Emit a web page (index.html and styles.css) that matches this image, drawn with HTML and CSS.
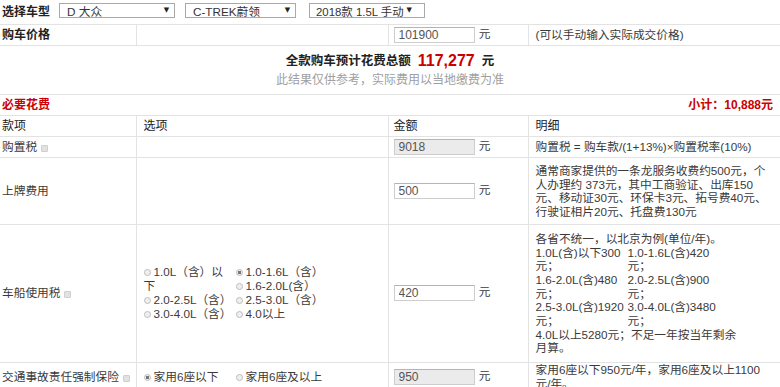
FILE: index.html
```html
<!DOCTYPE html>
<html lang="zh-CN">
<head>
  <meta charset="UTF-8">
  <title>购车费用计算</title>
  <link rel="stylesheet" href="styles.css">
</head>
<body>
  <div class="pick-row">
    <span class="pick-label">选择车型</span>
    <div class="fake-select brand"><span>D 大众</span><span class="arrow">▼</span></div>
    <div class="fake-select series"><span>C-TREK蔚领</span><span class="arrow">▼</span></div>
    <div class="fake-select model"><span>2018款 1.5L 手动</span><span class="arrow">▼</span></div>
  </div>

  <table class="calc">
    <colgroup>
      <col class="c-name"><col class="c-opt"><col class="c-amount"><col class="c-detail">
    </colgroup>
    <tr class="single">
      <td class="strong">购车价格</td>
      <td></td>
      <td><input class="amount" type="text" value="101900"> 元</td>
      <td>(可以手动输入实际成交价格)</td>
    </tr>
  </table>

  <div class="total">
    <div class="total-line">
      全款购车预计花费总额<span class="total-num">117,277</span>元
    </div>
    <div class="note">此结果仅供参考，实际费用以当地缴费为准</div>
  </div>

  <div class="section-head">
    <span>必要花费</span>
    <span>小计：10,888元</span>
  </div>

  <table class="calc">
    <colgroup>
      <col class="c-name"><col class="c-opt"><col class="c-amount"><col class="c-detail">
    </colgroup>
    <tr class="single head">
      <td>款项</td>
      <td>选项</td>
      <td>金额</td>
      <td>明细</td>
    </tr>
    <tr class="single">
      <td>购置税<i class="help"></i></td>
      <td></td>
      <td><input class="amount readonly" type="text" value="9018" readonly> 元</td>
      <td>购置税 = 购车款/(1+13%)×购置税率(10%)</td>
    </tr>
    <tr>
      <td>上牌费用</td>
      <td></td>
      <td><input class="amount" type="text" value="500"> 元</td>
      <td>
        <div class="detail long plate">
          通常商家提供的一条龙服务收费约500元，个<br>
          人办理约 373元，其中工商验证、出库150<br>
          元、移动证30元、环保卡3元、拓号费40元、<br>
          行驶证相片20元、托盘费130元
        </div>
      </td>
    </tr>
    <tr>
      <td>车船使用税<i class="help"></i></td>
      <td>
        <div class="options">
          <label class="opt first"><i class="radio"></i>1.0L（含）以下</label>
          <label class="opt"><i class="radio on"></i>1.0-1.6L（含）</label>
          <label class="opt"><i class="radio"></i>1.6-2.0L(含）</label>
          <label class="opt"><i class="radio"></i>2.0-2.5L（含）</label>
          <label class="opt"><i class="radio"></i>2.5-3.0L（含）</label>
          <label class="opt"><i class="radio"></i>3.0-4.0L（含）</label>
          <label class="opt"><i class="radio"></i>4.0以上</label>
        </div>
      </td>
      <td><input class="amount" type="text" value="420"> 元</td>
      <td>
        <div class="detail long tax">
          <div>各省不统一，以北京为例(单位/年)。</div>
          <div class="tax-grid">
            <span>1.0L(含)以下300元；</span>
            <span>1.0-1.6L(含)420元；</span>
            <span>1.6-2.0L(含)480元；</span>
            <span>2.0-2.5L(含)900元；</span>
            <span>2.5-3.0L(含)1920元；</span>
            <span>3.0-4.0L(含)3480元；</span>
          </div>
          <div>4.0L以上5280元；不足一年按当年剩余月算。</div>
        </div>
      </td>
    </tr>
    <tr>
      <td>交通事故责任强制保险<i class="help"></i></td>
      <td>
        <div class="options">
          <label class="opt"><i class="radio on"></i>家用6座以下</label>
          <label class="opt"><i class="radio"></i>家用6座及以上</label>
        </div>
      </td>
      <td><input class="amount readonly" type="text" value="950" readonly> 元</td>
      <td>
        <div class="detail">家用6座以下950元/年，家用6座及以上1100元/年。</div>
      </td>
    </tr>
  </table>
</body>
</html>
```

FILE: styles.css
```css
html {
  overflow: hidden;
}
body {
  margin: 0;
  background: #fff;
  color: #3a3a3a;
  font-family: "Liberation Sans", "Noto Sans CJK SC", sans-serif;
  font-size: 11.7px;
}
.pick-row {
  display: flex;
  align-items: flex-start;
  height: 24px;
  padding-left: 2px;
  border-bottom: 1px solid #e3e3e3;
}
.pick-label {
  font-size: 12px;
  font-weight: bold;
  line-height: 24px;
  color: #222;
}
.fake-select {
  display: flex;
  justify-content: space-between;
  flex-shrink: 0;
  box-sizing: border-box;
  height: 15px;
  margin-top: 3px;
  padding: 0 5px 0 7px;
  border: 1px solid #a9a9a9;
  line-height: 16px;
  overflow: hidden;
  white-space: nowrap;
  color: #333;
  font-size: 11.7px;
}
.fake-select .arrow {
  font-family: "DejaVu Sans", sans-serif;
  font-size: 7px;
  color: #222;
  line-height: 12px;
}
.brand {
  width: 116px;
  margin-left: 9px;
}
.series {
  width: 111px;
  margin-left: 10px;
}
.model {
  width: 116px;
  margin-left: 13px;
  padding: 0 3px 0 6px;
  justify-content: flex-start;
  font-size: 11.4px;
}
.model .arrow {
  margin-left: 3px;
}
.calc {
  width: 780px;
  table-layout: fixed;
  border-collapse: collapse;
}
.c-name { width: 136px; }
.c-opt { width: 252px; }
.c-amount { width: 140px; }
.c-detail { width: 252px; }
.calc td {
  padding: 0;
  border-bottom: 1px solid #e3e3e3;
  vertical-align: middle;
  line-height: 14px;
}
.calc td + td {
  border-left: 1px solid #e3e3e3;
}
.calc td:nth-child(1) { padding-left: 2px; }
.calc td:nth-child(2) { padding-left: 7px; }
.calc td:nth-child(3) { padding-left: 5px; }
.calc td:nth-child(4) { padding: 0 12px 0 7px; }
.single td {
  height: 20px;
}
.head td {
  color: #222;
  font-size: 12px;
}
.strong {
  font-size: 12px;
  font-weight: bold;
  color: #222;
}
.amount {
  box-sizing: border-box;
  width: 81px;
  height: 16px;
  margin: 0 1px 0 0;
  padding: 0 4px;
  border: 1px solid #cdcdcd;
  border-top-color: #b5b5b5;
  font-family: "Liberation Sans", sans-serif;
  font-size: 12px;
  color: #555;
  vertical-align: middle;
}
.amount.readonly {
  background: #ebebeb;
}
.help {
  display: inline-block;
  width: 5px;
  height: 5px;
  margin-left: 4px;
  border: 1px solid #cfcfcf;
  border-radius: 1px;
  background: #e2e2e2;
  vertical-align: -1px;
}
.total {
  padding: 5px 0 4px;
  text-align: center;
  border-bottom: 1px solid #e3e3e3;
}
.total-line {
  line-height: 19px;
  font-size: 12.5px;
  font-weight: bold;
  color: #222;
}
.total-num {
  margin: 0 7px;
  font-size: 16px;
  color: #c00;
  vertical-align: -1px;
}
.note {
  line-height: 19px;
  font-size: 12px;
  color: #a0a0a0;
}
.section-head {
  display: flex;
  justify-content: space-between;
  height: 20px;
  padding: 0 7px 0 2px;
  line-height: 20px;
  border-bottom: 1px solid #e3e3e3;
  color: #c00;
  font-size: 12px;
  font-weight: bold;
}
.detail {
  line-height: 13.7px;
}
.detail.long {
  padding: 7px 0;
}
.detail.plate {
  padding: 6px 0 5px;
}
.tax {
  width: 206px;
}
.tax-grid {
  display: grid;
  grid-template-columns: 92px 92px;
}
.options {
  display: grid;
  grid-template-columns: 90px 90px;
  grid-auto-rows: 14px;
  column-gap: 2px;
  line-height: 14px;
}
.opt.first {
  grid-row: span 2;
}
.radio {
  display: inline-block;
  box-sizing: border-box;
  width: 7px;
  height: 7px;
  margin-right: 3px;
  border: 1px solid #bdbdbd;
  border-radius: 50%;
  background: #efefef;
  vertical-align: 0;
}
.radio.on {
  background: radial-gradient(circle, #777 0 1.5px, #efefef 2px);
}
```
